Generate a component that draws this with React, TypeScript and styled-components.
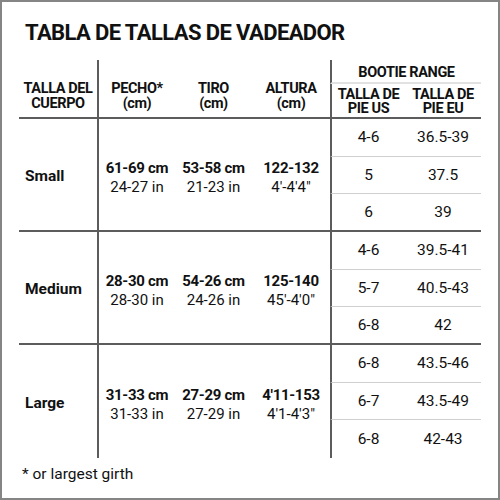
import styled, { createGlobalStyle } from "styled-components"

interface Booty {
    us: string;
    eu: string;
}

interface SizeRow {
    name: string;
    chestCm: string;
    chestIn: string;
    inseamCm: string;
    inseamIn: string;
    heightCm: string;
    heightFt: string;
    booties: Booty[];
}

const rows: SizeRow[] = [
    {
        name: "Small",
        chestCm: "61-69 cm", chestIn: "24-27 in",
        inseamCm: "53-58 cm", inseamIn: "21-23 in",
        heightCm: "122-132", heightFt: "4′-4′4″",
        booties: [{ us: "4-6", eu: "36.5-39" }, { us: "5", eu: "37.5" }, { us: "6", eu: "39" }]
    },
    {
        name: "Medium",
        chestCm: "28-30 cm", chestIn: "28-30 in",
        inseamCm: "54-26 cm", inseamIn: "24-26 in",
        heightCm: "125-140", heightFt: "45′-4′0″",
        booties: [{ us: "4-6", eu: "39.5-41" }, { us: "5-7", eu: "40.5-43" }, { us: "6-8", eu: "42" }]
    },
    {
        name: "Large",
        chestCm: "31-33 cm", chestIn: "31-33 in",
        inseamCm: "27-29 cm", inseamIn: "27-29 in",
        heightCm: "4′11-153", heightFt: "4′1-4′3″",
        booties: [{ us: "6-8", eu: "43.5-46" }, { us: "6-7", eu: "43.5-49" }, { us: "6-8", eu: "42-43" }]
    }
]

const App = () => {
    return <>
        <GlobalStyle />
        <Frame>
            <Title>TABLA DE TALLAS DE VADEADOR</Title>
            <Table>
                <HeadCell $bottomRule>TALLA DEL<br />CUERPO</HeadCell>
                <HeadCell $leftRule $bottomRule>PECHO*<br />(cm)</HeadCell>
                <HeadCell $bottomRule>TIRO<br />(cm)</HeadCell>
                <HeadCell $bottomRule>ALTURA<br />(cm)</HeadCell>
                <GroupHead>BOOTIE RANGE</GroupHead>
                <SubHead $leftRule>TALLA DE<br />PIE US</SubHead>
                <SubHead>TALLA DE<br />PIE EU</SubHead>

                {rows.map((row, i) => {
                    const last = i === rows.length - 1
                    return [
                        <SizeName key={row.name + "n"} $bottomRule={!last}>{row.name}</SizeName>,
                        <Measure key={row.name + "c"} $leftRule $bottomRule={!last}>
                            <Strong>{row.chestCm}</Strong>
                            <Plain>{row.chestIn}</Plain>
                        </Measure>,
                        <Measure key={row.name + "t"} $bottomRule={!last}>
                            <Strong>{row.inseamCm}</Strong>
                            <Plain>{row.inseamIn}</Plain>
                        </Measure>,
                        <Measure key={row.name + "h"} $bottomRule={!last}>
                            <Strong>{row.heightCm}</Strong>
                            <Plain>{row.heightFt}</Plain>
                        </Measure>,
                        ...row.booties.flatMap((b, j) => {
                            const end = j === row.booties.length - 1
                            const rule = end ? (last ? "none" : "dark") : "light"
                            return [
                                <BootCell key={`${row.name}us${j}`} $leftRule $rule={rule}>{b.us}</BootCell>,
                                <BootCell key={`${row.name}eu${j}`} $rule={rule}>{b.eu}</BootCell>
                            ]
                        })
                    ]
                })}
            </Table>
            <Footnote>* or largest girth</Footnote>
        </Frame>
    </>
}

const GlobalStyle = createGlobalStyle`
    html, body {
        margin: 0;
        padding: 0;
        background: #fff;
    }
    body {
        font-family: Roboto, "Liberation Sans", sans-serif;
        color: #111;
    }
`

const DARK = "#5c5c5c"
const LIGHT = "#cfcfcf"

const Frame = styled.div`
    width: 500px;
    height: 500px;
    box-sizing: border-box;
    border: 2px solid #858585;
    padding: 18px 17px 0 17px;
    display: flex;
    flex-direction: column;
`

const Title = styled.h1`
    margin: 0 0 0 6px;
    font-size: 22px;
    line-height: 26px;
    font-weight: 700;
    letter-spacing: -0.6px;
`

const Table = styled.div`
    margin-top: 14px;
    display: grid;
    grid-template-columns: 78px 78px 77px 78px 75px 76px;
    grid-template-rows: 24px 35px repeat(9, 37.67px);
`

const HeadCell = styled.div<{ $leftRule?: boolean; $bottomRule?: boolean }>`
    grid-row: span 2;
    box-sizing: border-box;
    display: flex;
    align-items: flex-end;
    justify-content: center;
    text-align: center;
    padding-bottom: 6px;
    font-size: 14.5px;
    line-height: 15px;
    font-weight: 700;
    letter-spacing: -0.4px;
    border-left: ${p => p.$leftRule ? `2px solid ${DARK}` : "none"};
    border-bottom: ${p => p.$bottomRule ? `2px solid ${DARK}` : "none"};
`

const GroupHead = styled.div`
    grid-column: span 2;
    box-sizing: border-box;
    display: flex;
    align-items: center;
    justify-content: center;
    padding-top: 2px;
    font-size: 14.5px;
    font-weight: 700;
    letter-spacing: -0.4px;
    border-left: 2px solid ${DARK};
    border-bottom: 2px solid #e2e2e2;
`

const SubHead = styled.div<{ $leftRule?: boolean }>`
    box-sizing: border-box;
    display: flex;
    align-items: flex-end;
    justify-content: center;
    text-align: center;
    padding-bottom: 1px;
    font-size: 14.5px;
    line-height: 14px;
    font-weight: 700;
    letter-spacing: -0.4px;
    border-left: ${p => p.$leftRule ? `2px solid ${DARK}` : "none"};
    border-bottom: 2px solid ${DARK};
`

const SizeName = styled.div<{ $bottomRule?: boolean }>`
    grid-row: span 3;
    box-sizing: border-box;
    display: flex;
    align-items: center;
    padding: 4px 0 0 6px;
    font-size: 15.5px;
    font-weight: 700;
    border-bottom: ${p => p.$bottomRule ? `2px solid ${DARK}` : "none"};
`

const Measure = styled.div<{ $leftRule?: boolean; $bottomRule?: boolean }>`
    grid-row: span 3;
    box-sizing: border-box;
    display: flex;
    flex-direction: column;
    align-items: center;
    justify-content: center;
    padding-top: 7px;
    font-size: 15px;
    line-height: 18.5px;
    border-left: ${p => p.$leftRule ? `2px solid ${DARK}` : "none"};
    border-bottom: ${p => p.$bottomRule ? `2px solid ${DARK}` : "none"};
`

const Strong = styled.span`
    font-weight: 700;
    letter-spacing: -0.3px;
`

const Plain = styled.span`
    font-weight: 400;
`

const BootCell = styled.div<{ $leftRule?: boolean; $rule: string }>`
    box-sizing: border-box;
    display: flex;
    align-items: center;
    justify-content: center;
    font-size: 15.5px;
    border-left: ${p => p.$leftRule ? `2px solid ${DARK}` : "none"};
    border-bottom: ${p =>
        p.$rule === "dark" ? `2px solid ${DARK}` :
        p.$rule === "light" ? `1px solid ${LIGHT}` : "none"};
`

const Footnote = styled.div`
    margin: 7px 0 0 3px;
    font-size: 15.5px;
    line-height: 18px;
`

export default App
